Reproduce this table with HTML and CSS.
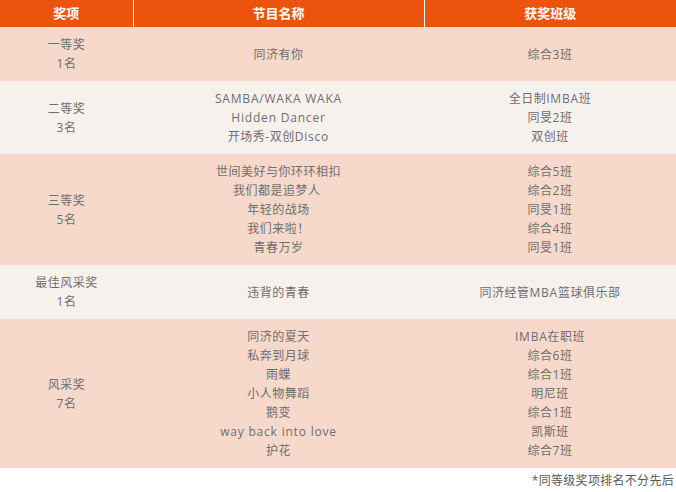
FILE: index.html
```html
<!DOCTYPE html>
<html lang="zh-CN">
<head>
<meta charset="utf-8">
<title>获奖名单</title>
<link rel="stylesheet" href="styles.css">
</head>
<body>
<table class="awards">
  <colgroup>
    <col class="c1"><col class="c2"><col class="c3">
  </colgroup>
  <thead>
    <tr><th>奖项</th><th>节目名称</th><th>获奖班级</th></tr>
  </thead>
  <tbody>
    <tr class="peach">
      <td>一等奖<br>1名</td>
      <td>同济有你</td>
      <td>综合3班</td>
    </tr>
    <tr class="light">
      <td>二等奖<br>3名</td>
      <td><span class="lat">SAMBA/WAKA WAKA</span><br><span class="lat">Hidden Dancer</span><br>开场秀-双创<span class="lat">Disco</span></td>
      <td>全日制<span class="lat">IMBA</span>班<br>同旻2班<br>双创班</td>
    </tr>
    <tr class="peach">
      <td>三等奖<br>5名</td>
      <td>世间美好与你环环相扣<br>我们都是追梦人&nbsp;<br>年轻的战场<br>我们来啦！<br>青春万岁</td>
      <td>综合5班<br>综合2班<br>同旻1班<br>综合4班<br>同旻1班</td>
    </tr>
    <tr class="light">
      <td>最佳风采奖<br>1名</td>
      <td>违背的青春</td>
      <td>同济经管<span class="lat">MBA</span>篮球俱乐部</td>
    </tr>
    <tr class="peach">
      <td>风采奖<br>7名</td>
      <td>同济的夏天<br>私奔到月球<br>雨蝶<br>小人物舞蹈<br>鹅变<br><span class="lat">way back into love</span><br>护花</td>
      <td><span class="lat">IMBA</span>在职班<br>综合6班<br>综合1班<br>明尼班<br>综合1班<br>凯斯班<br>综合7班</td>
    </tr>
  </tbody>
</table>
<p class="note">*同等级奖项排名不分先后</p>
</body>
</html>
```

FILE: styles.css
```css
html, body {
  margin: 0;
  padding: 0;
  background: #ffffff;
}
body {
  font-family: "Open Sans", "Noto Sans CJK SC", sans-serif;
  font-size: 12px;
  color: #6e6e6e;
}
.awards {
  width: 676px;
  border-collapse: collapse;
  table-layout: fixed;
}
.c1 { width: 133px; }
.c2 { width: 291px; }
.c3 { width: 252px; }
.awards th {
  background: #ec540e;
  color: #ffffff;
  font-weight: bold;
  font-size: 13px;
  height: 27px;
  padding: 0;
  line-height: 27px;
  border-left: 1px solid #ffffff;
  text-align: center;
}
.awards th:first-child { border-left: none; }
.awards td {
  text-align: center;
  vertical-align: middle;
  padding: 8px 0;
  line-height: 19px;
  letter-spacing: 0.5px;
}
.awards .lat { letter-spacing: 0.8px; }
.peach td { background: #f6d9cb; }
.light td { background: #f7f1ee; }
.note {
  margin: 4px 2px 0 0;
  text-align: right;
  font-size: 12px;
  line-height: 17px;
  letter-spacing: 0.3px;
  color: #5a5a5a;
}
```
